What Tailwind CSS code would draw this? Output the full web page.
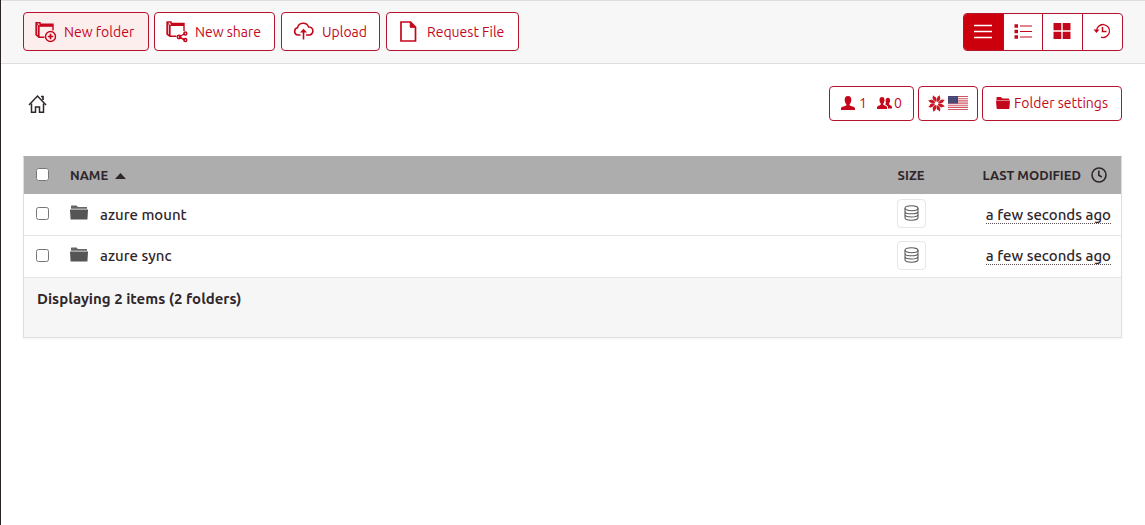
<!DOCTYPE html>
<html lang="en">
<head>
    <meta charset="UTF-8">
    <meta name="viewport" content="width=device-width, initial-scale=1.0">
    <script src="https://cdn.jsdelivr.net/npm/@tailwindcss/browser@4"></script>
    <title>Files</title>
</head>
<body class="min-h-screen bg-white border-l border-[#2b2226] font-['Ubuntu','Noto_Sans',sans-serif] text-sm text-[#2f262b]">
    <!-- toolbar -->
    <header class="flex items-center justify-between h-16 px-[22px] pb-px bg-[#f7f7f7] border-y border-[#dedede]">
        <div class="flex gap-[5px] text-[#c4071b]">
            <button class="flex items-center w-[126px] h-[39px] pl-[11px] gap-[7px] rounded border border-[#b5122d] bg-[#fdeeee] whitespace-nowrap">
                <svg class="w-[22px] h-[22px] shrink-0" viewBox="0 0 22 22" fill="none" stroke="currentColor" stroke-width="1.400">
                    <path d="M9.500 16.300H4L1.200 14V1.700H5V3.200H18V9.500"/>
                    <path d="M3.800 16V5H18" stroke-width="1.400"/>
                    <path d="M1.200 1.500L3.800 5V16L1.200 14Z" fill="currentColor" fill-opacity=".3" stroke-width="1"/>
                    <path d="M5 4.200H18" stroke-width="2"/>
                    <circle cx="15.500" cy="15.500" r="5"/>
                    <path d="M15.500 12.800V18.200M12.800 15.500H18.200" stroke-width="1.700"/>
                </svg>
                New folder
            </button>
            <button class="flex items-center w-[121px] h-[39px] pl-[11px] gap-[7px] rounded border border-[#b5122d] bg-white whitespace-nowrap">
                <svg class="w-[22px] h-[22px] shrink-0" viewBox="0 0 22 22" fill="none" stroke="currentColor" stroke-width="1.400">
                    <path d="M10.500 15.300H4L1.200 13.300V1H5V2.500H18V10"/>
                    <path d="M3.800 15V4.400H18" stroke-width="1.400"/>
                    <path d="M1.200 1L3.800 4.500V15L1.200 13.300Z" fill="currentColor" fill-opacity=".3" stroke-width="1"/>
                    <path d="M5 3.500H18" stroke-width="2"/>
                    <path d="M13 16L19 12.500M13 16L19 19"/>
                    <circle cx="13" cy="16" r="1.700"/>
                    <circle cx="19.300" cy="12.500" r="1.500"/>
                    <circle cx="19.300" cy="19" r="1.500"/>
                </svg>
                New share
            </button>
            <button class="flex items-center w-[99px] h-[39px] ml-px pl-[11px] gap-2 rounded border border-[#b5122d] bg-white whitespace-nowrap">
                <svg class="w-[21px] h-[21px] shrink-0" viewBox="0 0 21 21" fill="none" stroke="currentColor" stroke-width="1.600">
                    <path d="M7.500 14H4.500A3.700 3.700 0 0 1 4.500 6.800A5.800 5.800 0 0 1 15.600 6A4 4 0 0 1 16.200 14H13"/>
                    <path d="M10.500 18.500V10"/>
                    <path d="M7 11.500L10.500 7.700L14 11.500Z" fill="currentColor" stroke="none"/>
                </svg>
                Upload
            </button>
            <button class="flex items-center w-[133px] h-[39px] ml-px pl-[12px] gap-[10px] rounded border border-[#b5122d] bg-white whitespace-nowrap">
                <svg class="w-[18px] h-[22px] shrink-0" viewBox="0 0 18 22" fill="none" stroke="currentColor" stroke-width="1.700">
                    <path d="M2 1H11.500L16.500 6V20H2Z"/>
                    <path d="M11.200 1V6.300H16.500Z" fill="currentColor" stroke-width="1"/>
                </svg>
                Request File
            </button>
        </div>
        <div class="grid grid-cols-4 w-40 h-[38px] rounded border border-[#b5122d] bg-white text-[#c4071b] divide-x divide-[#b5122d] overflow-hidden">
            <button class="flex items-center justify-center bg-[#cc000c] text-white" aria-label="List view">
                <svg class="w-[18px] h-4" viewBox="0 0 18 16" stroke="currentColor" stroke-width="1.600">
                    <path d="M0 1.500H18M0 7.500H18M0 13.500H18"/>
                </svg>
            </button>
            <button class="flex items-center justify-center" aria-label="Detail view">
                <svg class="w-[18px] h-4" viewBox="0 0 18 16" stroke="currentColor" stroke-width="1.200">
                    <path d="M6 2H18M6 7.500H18M6 13H18"/>
                    <path d="M0.500 2H4M0.500 7.500H4M0.500 13H4" stroke-width="3.500"/>
                </svg>
            </button>
            <button class="flex items-center justify-center" aria-label="Grid view">
                <svg class="w-[18px] h-[18px]" viewBox="0 0 18 18" fill="currentColor">
                    <path d="M0.500 0H8.300V7.300H0.500ZM9.700 0H17.500V7.300H9.700ZM0.500 8.700H8.300V16H0.500ZM9.700 8.700H17.500V16H9.700Z"/>
                </svg>
            </button>
            <button class="flex items-center justify-center" aria-label="Recent files">
                <svg class="w-[18px] h-[18px]" viewBox="0 0 18 18" fill="none" stroke="currentColor" stroke-width="1.300">
                    <path d="M3.500 8A6.500 6.500 0 1 1 8 14.200"/>
                    <path d="M9.500 4V8.500H13.500" stroke-width="1.500"/>
                    <path d="M0.500 6.500H6.500L3.500 10Z" fill="currentColor" stroke="none"/>
                </svg>
            </button>
        </div>
    </header>

    <main class="px-[22px]">
        <div class="flex items-center justify-between pt-[22px]">
            <a href="#" aria-label="Home" class="ml-[5px]">
                <svg class="w-5 h-5" viewBox="0 0 20 20" fill="none" stroke="currentColor" stroke-width="1.500">
                    <path d="M1 11L9.500 2L18 11"/>
                    <path d="M3.500 9.500V18.300H7.500V13H11.500V18.300H15.500V9.500"/>
                    <path d="M13 2.500H15V6" stroke-width="1.700"/>
                </svg>
            </a>
            <div class="flex gap-1 mr-px text-[#c4071b]">
                <button class="flex items-center w-[85px] h-[35px] pl-[11px] pb-px rounded border border-[#b5122d] whitespace-nowrap">
                    <svg class="w-[14px] h-[14px] mr-1" viewBox="0 0 14 14" fill="currentColor">
                        <path d="M7 0C9.300 0 10.300 1.500 10.300 3.800C10.300 6 9.500 7.300 8.600 8.200V9.300C9.500 10.400 14 10.500 14 12.500V14H0V12.500C0 10.500 4.500 10.400 5.400 9.300V8.200C4.500 7.300 3.700 6 3.700 3.800C3.700 1.500 4.700 0 7 0Z"/>
                    </svg>
                    1
                    <svg class="w-[15px] h-3 ml-[10px] mr-[2px]" viewBox="0 0 15 12" fill="currentColor">
                        <path d="M5 0C6.700 0 7.500 1.200 7.500 3C7.500 4.800 6.800 6 6.200 6.600V7.500C7 8.600 10 8.800 10 10.500V12H0V10.500C0 8.800 3 8.600 3.800 7.500V6.600C3.200 6 2.500 4.800 2.500 3C2.500 1.200 3.300 0 5 0Z"/>
                        <path d="M11 0.800C12.500 0.800 13.100 1.900 13.100 3.300C13.100 4.800 12.600 5.700 12.100 6.300V7.200C12.700 8.200 15 8.600 15 10V11.500H11V10.200C10.900 8.500 9 8 8.300 7.400C9 6.500 8.900 5 8.600 3.800C8.500 2 9.500 0.800 11 0.800Z"/>
                    </svg>
                    0
                </button>
                <button class="flex items-center justify-center gap-[3px] w-[60px] h-[35px] pr-px pb-px rounded border border-[#b5122d]" aria-label="Region">
                    <svg class="w-[17px] h-[17px]" viewBox="-8.500 -8.500 17 17" fill="#cc1422">
                        <path id="blade" d="M.6 -1.700L.4 -5Q.8 -7.200 3.400 -8.300Q3 -6.500 3.900 -5.200Q3.700 -3 1.600 -1.400Z"/>
                        <use href="#blade" transform="rotate(45)"/>
                        <use href="#blade" transform="rotate(90)"/>
                        <use href="#blade" transform="rotate(135)"/>
                        <use href="#blade" transform="rotate(180)"/>
                        <use href="#blade" transform="rotate(225)"/>
                        <use href="#blade" transform="rotate(270)"/>
                        <use href="#blade" transform="rotate(315)"/>
                    </svg>
                    <svg class="w-5 h-[14px]" viewBox="0 0 20 14">
                        <path fill="#fff" d="M0 0H20V14H0Z"/>
                        <path stroke="#cf5563" stroke-width="1.100" d="M0 .5H20M0 2.700H20M0 4.900H20M0 7.100H20M0 9.300H20M0 11.400H20M0 13.500H20"/>
                        <path fill="#44446f" d="M0 0H10V7.500H0Z"/>
                        <path stroke="#6a6a94" stroke-width=".8" stroke-dasharray="1 1.500" d="M1 1.500H9M2 3.700H9M1 5.900H9"/>
                    </svg>
                </button>
                <button class="flex items-center justify-center gap-1 w-[140px] h-[35px] pb-px rounded border border-[#b5122d] whitespace-nowrap">
                    <svg class="w-[14px] h-3" viewBox="0 0 14 12" fill="currentColor">
                        <path d="M0.500 3V0.800Q.5 0 1.300 0H5L6.300 1.500H12.500Q13.300 1.500 13.300 3Z"/>
                        <path d="M0 3.600H14L13.400 11.200Q13.300 12 12.500 12H1.500Q.7 12 .6 11.200Z"/>
                    </svg>
                    Folder settings
                </button>
            </div>
        </div>

        <!-- file list -->
        <div class="mt-[35px] mr-px border border-[#dfdfdf] border-t-[#adadad] shadow-xs">
            <table class="w-full border-collapse">
                <thead class="bg-[#adadad] text-[13px]">
                    <tr class="h-[37px]">
                        <th class="w-[46px] pl-3 pb-[2px] text-left"><input type="checkbox" aria-label="Select all" class="block w-[13px] h-[13px]"></th>
                        <th class="text-left">
                            <span class="flex items-center gap-[7px]">NAME
                                <svg class="w-[11px] h-[6px]" viewBox="0 0 11 6" fill="currentColor"><path d="M0 6L5.500 0L11 6Z"/></svg>
                            </span>
                        </th>
                        <th class="w-[60px]">SIZE</th>
                        <th class="w-[180px] pr-[14px]">
                            <span class="flex items-center justify-end gap-[10px]">LAST MODIFIED
                                <svg class="w-4 h-[18px] pb-[2px]" viewBox="0 0 16 16" fill="none" stroke="currentColor" stroke-width="1.600">
                                    <circle cx="8" cy="8" r="7"/>
                                    <path d="M7.800 3.500V8.300L10.800 10"/>
                                </svg>
                            </span>
                        </th>
                    </tr>
                </thead>
                <tbody class="text-[15px]">
                    <tr class="h-[41px] border-b border-[#e4e4e4]">
                        <td class="pl-3 pb-[2px]"><input id="mount" type="checkbox" class="block w-[13px] h-[13px]"></td>
                        <td>
                            <label for="mount" class="flex items-center gap-3 font-medium">
                                <svg class="w-[18px] h-[18px] pb-[3px]" viewBox="0 0 18 15" fill="#555"><path d="M0 4.500L.6 14.500H17.400L18 4.500H0Z"/><path d="M1 3.700V1Q1 .5 1.600 .5H6.500L8 2H17V3.700Z" fill="#666"/></svg>
                                azure mount
                            </label>
                        </td>
                        <td class="pb-px">
                            <button aria-label="Show size" class="flex items-center justify-center mx-auto w-[29px] h-[29px] pb-[2px] rounded-sm border border-[#e6e6e6]">
                                <svg class="w-[15px] h-4" viewBox="0 0 15 16" fill="none" stroke="#5c5c5c" stroke-width="1.100">
                                    <ellipse cx="7.500" cy="3.200" rx="6.500" ry="2.500"/>
                                    <path d="M1 3.200V12.700C1 16 14 16 14 12.700V3.200M1 6.400C1 9.600 14 9.600 14 6.400M1 9.600C1 12.800 14 12.800 14 9.600"/>
                                </svg>
                            </button>
                        </td>
                        <td class="pr-[10px] text-right font-medium"><span class="border-b border-dotted border-[#5b5056]">a few seconds ago</span></td>
                    </tr>
                    <tr class="h-[42px] border-b border-[#e4e4e4]">
                        <td class="pl-3 pb-[2px]"><input id="sync" type="checkbox" class="block w-[13px] h-[13px]"></td>
                        <td>
                            <label for="sync" class="flex items-center gap-3 font-medium">
                                <svg class="w-[18px] h-[18px] pb-[3px]" viewBox="0 0 18 15" fill="#555"><path d="M0 4.500L.6 14.500H17.400L18 4.500H0Z"/><path d="M1 3.700V1Q1 .5 1.600 .5H6.500L8 2H17V3.700Z" fill="#666"/></svg>
                                azure sync
                            </label>
                        </td>
                        <td class="pb-px">
                            <button aria-label="Show size" class="flex items-center justify-center mx-auto w-[29px] h-[29px] pb-[2px] rounded-sm border border-[#e6e6e6]">
                                <svg class="w-[15px] h-4" viewBox="0 0 15 16" fill="none" stroke="#5c5c5c" stroke-width="1.100">
                                    <ellipse cx="7.500" cy="3.200" rx="6.500" ry="2.500"/>
                                    <path d="M1 3.200V12.700C1 16 14 16 14 12.700V3.200M1 6.400C1 9.600 14 9.600 14 6.400M1 9.600C1 12.800 14 12.800 14 9.600"/>
                                </svg>
                            </button>
                        </td>
                        <td class="pr-[10px] text-right font-medium"><span class="border-b border-dotted border-[#5b5056]">a few seconds ago</span></td>
                    </tr>
                </tbody>
            </table>
            <p class="px-[13px] pt-[10px] pb-7 bg-[#f6f6f6] text-[15px]/[21px] font-bold">Displaying 2 items (2 folders)</p>
        </div>
    </main>
</body>
</html>
